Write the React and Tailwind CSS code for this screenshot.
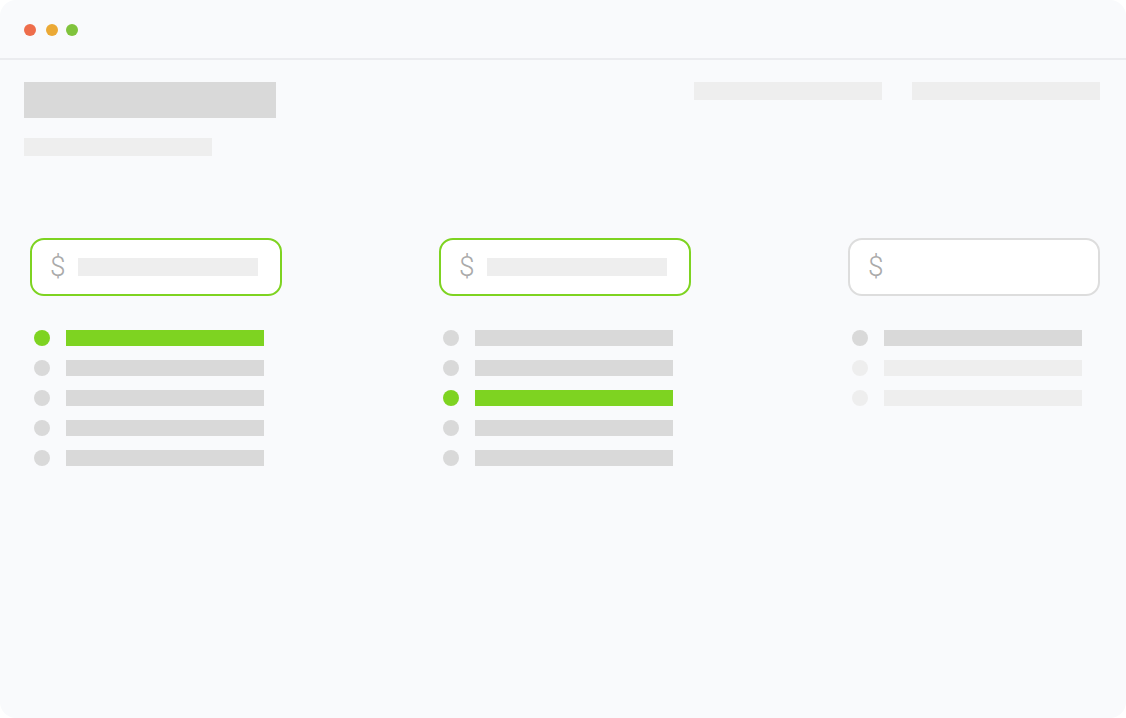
import React from "react";

const columns = [
  { active: true, filled: true, rows: ["green", "gray", "gray", "gray", "gray"] },
  { active: true, filled: true, rows: ["gray", "gray", "green", "gray", "gray"] },
  { active: false, filled: false, rows: ["gray", "light", "light"] },
];

const dotClass = {
  green: "bg-[#7ed321]",
  gray: "bg-[#d9d9d9]",
  light: "bg-[#eeeeee]",
};

const PriceColumn = ({ col }) => (
  <div className="w-[252px] flex flex-col">
    {/* price box */}
    <div
      className={
        col.active
          ? "h-[58px] rounded-[14px] border-2 border-[#7ed321] bg-white flex items-center pl-[18px]"
          : "h-[58px] rounded-[14px] border-2 border-[#dddddd] bg-white flex items-center pl-[18px]"
      }
    >
      <span className="font-['Roboto',sans-serif] font-light text-[28px] leading-none text-[#aaaaaa] w-[28px]">
        $
      </span>
      {col.filled && <div className="w-[180px] h-[18px] bg-[#eeeeee]"></div>}
    </div>

    {/* feature list */}
    <div className="mt-[34px] flex flex-col gap-[14px] pl-[4px]">
      {col.rows.map((r, i) => (
        <div key={i} className="flex items-center gap-[16px]">
          <div className={`w-[16px] h-[16px] rounded-full ${dotClass[r]}`}></div>
          <div className={`w-[198px] h-[16px] ${dotClass[r]}`}></div>
        </div>
      ))}
    </div>
  </div>
);

export default function App() {
  return (
    <div className="w-[1126px] h-[718px] bg-white">
      <div className="w-full h-full rounded-[16px] bg-[#f9fafc] overflow-hidden flex flex-col">
        {/* window bar */}
        <div className="h-[60px] border-b-2 border-[#ebecef] flex items-center pl-[24px] pt-[2px]">
          <div className="w-[12px] h-[12px] rounded-full bg-[#ee6d4b]"></div>
          <div className="w-[12px] h-[12px] rounded-full bg-[#eba935] ml-[10px]"></div>
          <div className="w-[12px] h-[12px] rounded-full bg-[#80c33c] ml-[8px]"></div>
        </div>

        <div className="pl-[24px] pr-[26px] pt-[22px]">
          {/* header placeholders */}
          <div className="flex justify-between">
            <div className="flex flex-col gap-[20px]">
              <div className="w-[252px] h-[36px] bg-[#d9d9d9]"></div>
              <div className="w-[188px] h-[18px] bg-[#eeeeee]"></div>
            </div>
            <div className="flex gap-[30px]">
              <div className="w-[188px] h-[18px] bg-[#eeeeee]"></div>
              <div className="w-[188px] h-[18px] bg-[#eeeeee]"></div>
            </div>
          </div>

          {/* pricing columns */}
          <div className="mt-[82px] pl-[6px] flex justify-between">
            {columns.map((c, i) => (
              <PriceColumn key={i} col={c} />
            ))}
          </div>
        </div>
      </div>
    </div>
  );
}
